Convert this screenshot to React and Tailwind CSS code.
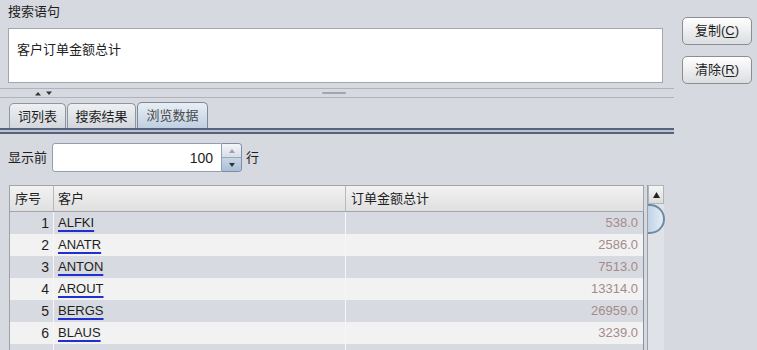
export default function App() {
  const rows = [
    [1, "ALFKI", "538.0"],
    [2, "ANATR", "2586.0"],
    [3, "ANTON", "7513.0"],
    [4, "AROUT", "13314.0"],
    [5, "BERGS", "26959.0"],
    [6, "BLAUS", "3239.0"],
    ["", "", ""],
  ];
  return (
    <div className="w-[757px] h-[350px] overflow-hidden bg-[#d6d9df] text-[13px] leading-[16px] text-[#1e1e1e] flex font-['Liberation_Sans','Noto_Sans_CJK_SC',sans-serif]">
      <div className="w-[674px] flex flex-col shrink-0">
        <div className="h-[28px] pl-[8px] pt-[4px]">搜索语句</div>
        <div className="ml-[8px] w-[655px] h-[55px] bg-white border border-[#a3a7ad] pl-[8px] pt-[13px] shrink-0">客户订单金额总计</div>
        <div className="h-[19px] flex flex-col shrink-0">
          <div className="h-[5px]" />
          <div className="h-[10px] border-t border-b border-[#b0b4ba] relative">
            <svg className="absolute left-[35px] top-[2px]" width="18" height="5" viewBox="0 0 18 5">
              <path d="M0 4.5 L3 1 L6 4.5 Z" fill="#333" />
              <path d="M11 0.5 L17 0.5 L14 4 Z" fill="#333" />
            </svg>
            <div className="absolute left-[322px] top-[3px] w-[24px] h-[2px] rounded-full bg-[#a2a6ac]" />
          </div>
          <div className="h-[4px]" />
        </div>
        <div className="h-[26px] flex items-end pl-[9px] gap-[1px] shrink-0">
          <div className="w-[57px] h-[25px] rounded-t-[5px] border border-b-0 border-[#8d96a2] bg-gradient-to-b from-[#eef0f3] to-[#d3d7dd] flex items-center justify-center pt-[1px]">词列表</div>
          <div className="w-[69px] h-[25px] rounded-t-[5px] border border-b-0 border-[#8d96a2] bg-gradient-to-b from-[#eef0f3] to-[#d3d7dd] flex items-center justify-center pt-[1px]">搜索结果</div>
          <div className="w-[71px] h-[26px] rounded-t-[5px] border border-b-0 border-[#7d8898] bg-gradient-to-b from-[#e9eef4] to-[#bfd0e2] flex items-center justify-center pt-[1px] text-[#4a4a4a]">浏览数据</div>
        </div>
        <div className="h-[2px] bg-[#56637a] shrink-0" />
        <div className="h-[2px] bg-[#b9c5d4] shrink-0" />
        <div className="h-[2px] bg-[#56637a] shrink-0" />
        <div className="mt-[9px] h-[29px] flex items-center pl-[8px] shrink-0">
          <div className="w-[44px]">显示前</div>
          <div className="w-[170px] h-[29px] bg-white border border-[#8fa0b4] rounded-l-[3px] flex items-center justify-end pr-[8px] text-[14px]">100</div>
          <div className="w-[20px] h-[29px] flex flex-col border border-l-0 border-[#7e8ea2] rounded-r-[4px] overflow-hidden">
            <div className="flex-1 bg-gradient-to-b from-[#f4f6f9] to-[#d7dee8] flex items-center justify-center border-b border-[#9aa8b8]">
              <svg width="6" height="4" viewBox="0 0 6 4"><path d="M0 4 L3 0 L6 4 Z" fill="#9aa2ac" /></svg>
            </div>
            <div className="flex-1 bg-gradient-to-b from-[#c8d6e6] to-[#a9bfd6] flex items-center justify-center">
              <svg width="6" height="4" viewBox="0 0 6 4"><path d="M0 0 L6 0 L3 4 Z" fill="#333" /></svg>
            </div>
          </div>
          <div className="ml-[4px]">行</div>
        </div>
        <div className="mt-[13px] flex flex-1 min-h-0">
          <div className="ml-[9px] w-[635px] border-l border-[#9ca2aa] flex flex-col">
            <div className="h-[27px] flex border-t border-b border-[#a2a6ac] bg-gradient-to-b from-[#f2f2f2] to-[#e0e0e0] shrink-0">
              <div className="w-[44px] border-r border-[#b6b9be] pl-[5px] flex items-center">序号</div>
              <div className="w-[292px] border-r border-[#b6b9be] pl-[4px] flex items-center">客户</div>
              <div className="flex-1 border-r border-[#a2a6ac] pl-[5px] flex items-center">订单金额总计</div>
            </div>
            {rows.map((r, i) => (
              <div key={i} className={`h-[22px] flex shrink-0 ${i % 2 === 0 ? "bg-[#d7dae0]" : "bg-[#f2f2f2]"}`}>
                <div className="w-[44px] border-r border-[#f6f6f6] pr-[4px] flex items-center justify-end text-[14px]">{r[0]}</div>
                <div className="w-[292px] border-r border-[#f6f6f6] pl-[4px] flex items-center text-[13px]">
                  {r[1] && <span className="underline decoration-[#2030d0] decoration-[1.5px] underline-offset-[3px]">{r[1]}</span>}
                </div>
                <div className="flex-1 pr-[5px] flex items-center justify-end text-[13px] text-[#a68a8a] border-r border-[#8a9098]">{r[2]}</div>
              </div>
            ))}
          </div>
          <div className="ml-[3px] w-[17px] flex flex-col bg-[#dfe2e7] border-l border-[#9aa0a8] relative">
            <div className="h-[19px] border border-[#b0b5bc] bg-gradient-to-b from-[#f5f5f5] to-[#dcdcdc] flex items-center justify-center shrink-0">
              <svg width="7" height="6" viewBox="0 0 7 6"><path d="M0 6 L3.5 0 L7 6 Z" fill="#222" /></svg>
            </div>
            <div className="h-[30px] w-[17px] rounded-r-[15px] border-2 border-l-0 border-[#6f8aa6] bg-gradient-to-r from-[#bfd3e6] to-[#e4edf6] shrink-0" />
          </div>
        </div>
      </div>
      <div className="ml-[8px] flex flex-col">
        <div className="mt-[17px] w-[70px] h-[28px] rounded-[5px] border border-[#8a8e94] bg-gradient-to-b from-[#ffffff] to-[#dcdde0] flex items-center justify-center">
          复制(<span className="underline underline-offset-[2px]">C</span>)
        </div>
        <div className="mt-[11px] w-[70px] h-[28px] rounded-[5px] border border-[#8a8e94] bg-gradient-to-b from-[#ffffff] to-[#dcdde0] flex items-center justify-center">
          清除(<span className="underline underline-offset-[2px]">R</span>)
        </div>
      </div>
    </div>
  );
}
